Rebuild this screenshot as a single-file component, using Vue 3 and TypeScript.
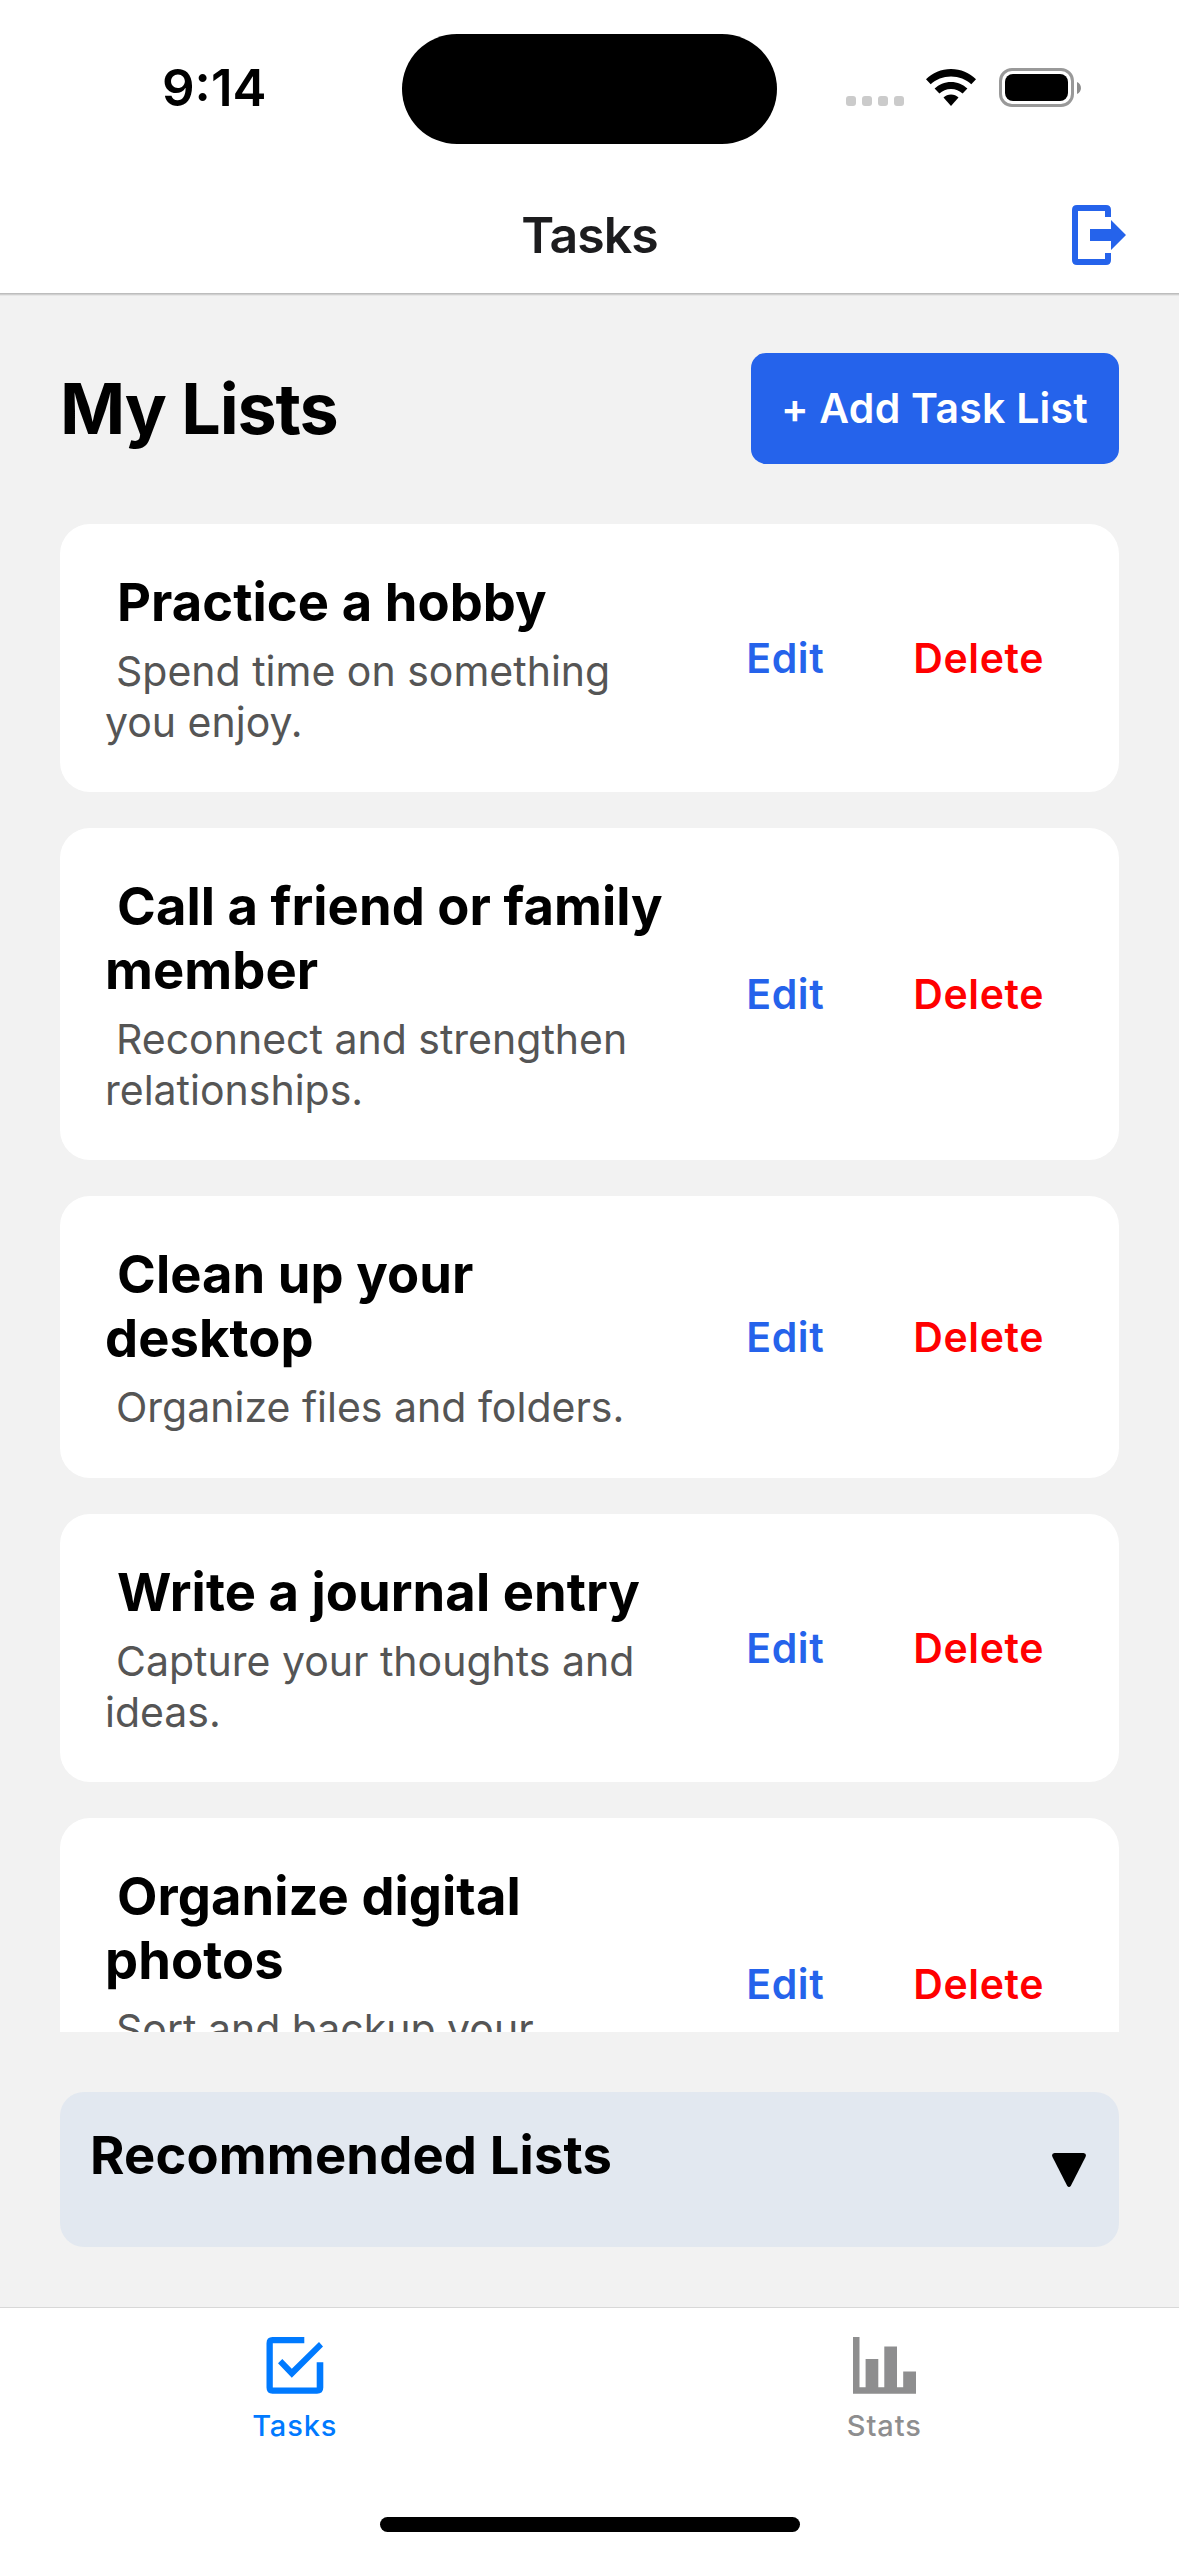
<script setup lang="ts">
interface TaskList {
  id: number
  title: string
  description: string
}

const lists: TaskList[] = [
  { id: 1, title: 'Practice a hobby', description: 'Spend time on something you enjoy.' },
  { id: 2, title: 'Call a friend or family member', description: 'Reconnect and strengthen relationships.' },
  { id: 3, title: 'Clean up your desktop', description: 'Organize files and folders.' },
  { id: 4, title: 'Write a journal entry', description: 'Capture your thoughts and ideas.' },
  { id: 5, title: 'Organize digital photos', description: 'Sort and backup your photos.' },
]
</script>

<template>
  <div class="screen">
    <div class="status">
      <div class="clock">9:14</div>
      <div class="island"></div>
      <div class="indicators">
        <div class="dots"><i v-for="n in 4" :key="n"></i></div>
        <svg class="wifi" width="50" height="37" viewBox="0 0 50 37">
          <path d="M25 0C34.800 0 43.500 3.900 50 10.300L45.300 15.300C40 10.300 32.900 7.400 25 7.400S10 10.300 4.700 15.300L0 10.300C6.500 3.900 15.200 0 25 0Z" />
          <path d="M25 12.900C31.400 12.900 37.100 15.400 41.400 19.500L36.600 24.600C33.600 21.700 29.500 20 25 20S16.400 21.700 13.400 24.600L8.600 19.500C12.900 15.400 18.600 12.900 25 12.900Z" />
          <path d="M25 25.600C27.900 25.600 30.500 26.700 32.500 28.600L25 37L17.500 28.600C19.500 26.700 22.100 25.600 25 25.600Z" />
        </svg>
        <div class="battery"><div class="charge"></div></div>
        <svg class="nub" width="4" height="12" viewBox="0 0 4 12"><path d="M0 0C5.300 2 5.300 10 0 12Z" fill="#8c8c8c" /></svg>
      </div>
    </div>

    <header class="nav">
      <h1>Tasks</h1>
      <svg class="logout" width="54" height="60" viewBox="0 0 54 60" fill="#2563eb">
        <path d="M5 0H34Q39 0 39 5V12H33V6H6V54H33V48H39V55Q39 60 34 60H5Q0 60 0 55V5Q0 0 5 0Z" />
        <path d="M18 24H39V15L54 30L39 45V36H18Z" />
      </svg>
    </header>

    <main>
      <div class="heading">
        <h2>My Lists</h2>
        <button class="add">+ Add Task List</button>
      </div>

      <div class="lists">
        <article v-for="list in lists" :key="list.id" class="card">
          <div class="info">
            <h3>{{ list.title }}</h3>
            <p>{{ list.description }}</p>
          </div>
          <button class="action edit">Edit</button>
          <button class="action delete">Delete</button>
        </article>
      </div>

      <section class="recommended">
        <h3>Recommended Lists</h3>
        <svg class="caret" width="34" height="34" viewBox="0 0 34 34">
          <path d="M2.500 0H31.500Q35 0.500 33.500 4L19 32.500Q17 35.500 15 32.500L0.500 4Q-1 0.500 2.500 0Z" />
        </svg>
      </section>
    </main>

    <nav class="tabs">
      <div class="tab active">
        <svg width="72" height="57" viewBox="0 0 72 57" fill="currentColor">
          <path d="M13.500 0H45.300V6.300H13.800V50.500H57.700V25.300H64.300V50.500Q64.300 56.700 58 56.700H13.500Q7.500 56.700 7.500 50.500V6.300Q7.500 0 13.500 0Z" />
          <path d="M19 26.300L23.300 22L32.800 31.800L60 5L64 9.500L32.800 40.700Z" />
        </svg>
        <span>Tasks</span>
      </div>
      <div class="tab">
        <svg width="63" height="57" viewBox="0 0 63 57" fill="currentColor">
          <path d="M0 0H6.500V50.300H12.600V22H25.300V50.300H31.300V9.500H44V50.300H50.200V34.500H63V56.700H0Z" />
        </svg>
        <span>Stats</span>
      </div>
    </nav>
    <div class="home"></div>
  </div>
</template>

<style>
body {
  margin: 0;
}
</style>

<style scoped>
.screen {
  width: 1179px;
  height: 2556px;
  overflow: hidden;
  display: flex;
  flex-direction: column;
  background: #fff;
  color: #000;
  font-family: Inter, "Liberation Sans", sans-serif;
}
h1, h2, h3, p {
  margin: 0;
}
button {
  border: 0;
  padding: 0;
  background: none;
  font-family: inherit;
}
svg {
  display: block;
}
.status {
  height: 177px;
  flex: none;
  display: flex;
  align-items: flex-start;
  box-sizing: border-box;
  padding-top: 34px;
}
.clock {
  box-sizing: border-box;
  width: 402px;
  padding-left: 162px;
  margin-top: 24px;
  font-size: 51px;
  line-height: 60px;
  font-weight: 600;
  letter-spacing: 0;
}
.island {
  width: 375px;
  height: 110px;
  border-radius: 55px;
  background: #000;
}
.indicators {
  display: flex;
  align-items: center;
  margin: 34px 0 0 69px;
  height: 39px;
}
.dots {
  display: flex;
  gap: 6px;
  margin: 27px 22px 0 0;
}
.dots i {
  width: 10px;
  height: 10px;
  border-radius: 3px;
  background: #cbcbcb;
}
.battery {
  width: 75px;
  height: 39px;
  box-sizing: border-box;
  border: 3px solid #999;
  border-radius: 13px;
  padding: 3px;
  margin-left: 23px;
}
.charge {
  height: 27px;
  border-radius: 8px;
  background: #000;
}
.nub {
  margin-left: 3px;
}
.nav {
  height: 116px;
  flex: none;
  display: grid;
  grid-template-columns: 1fr auto 1fr;
  align-items: center;
  border-bottom: 1px solid #bdbdbd;
}
.nav h1 {
  grid-column: 2;
  font-size: 50px;
  line-height: 60px;
  font-weight: 600;
  letter-spacing: -1px;
  color: #1c1c1e;
}
.logout {
  justify-self: end;
  margin-right: 53px;
}
main {
  height: 2013px;
  flex: none;
  box-sizing: border-box;
  padding: 59px 60px 60px;
  background: #f2f2f2;
  box-shadow: inset 0 1px #cfcfcf, inset 0 2px #e6e6e6;
  display: flex;
  flex-direction: column;
}
.heading {
  display: flex;
  justify-content: space-between;
  align-items: center;
  height: 111px;
  margin-bottom: 60px;
  flex: none;
}
.heading h2 {
  font-size: 70px;
  line-height: 84px;
  font-weight: 700;
  letter-spacing: -1.15px;
}
.add {
  width: 368px;
  height: 111px;
  padding: 0 1px 2px 0;
  border-radius: 15px;
  background: #2563eb;
  color: #fff;
  font-size: 41px;
  font-weight: 600;
  letter-spacing: 0.25px;
}
.lists {
  flex: 1;
  min-height: 0;
  overflow: hidden;
  display: flex;
  flex-direction: column;
  gap: 36px;
}
.card {
  flex: none;
  display: flex;
  align-items: center;
  padding: 45px 75px 45px 45px;
  border-radius: 30px;
  background: #fff;
}
.info {
  width: 575px;
  margin: 1px auto -1px 0;
}
.info h3 {
  font-size: 52.5px;
  line-height: 64px;
  font-weight: 700;
  letter-spacing: 0.06px;
  text-indent: 12px;
}
.info p {
  margin-top: 12px;
  min-height: 52px;
  font-size: 41px;
  line-height: 51px;
  color: #555;
  text-indent: 11px;
}
.action {
  font-size: 41px;
  line-height: 51px;
  font-weight: 600;
  letter-spacing: 0.6px;
}
.edit {
  color: #2563eb;
  margin-right: 89px;
}
.delete {
  color: #f00;
}
.recommended {
  height: 155px;
  flex: none;
  margin-top: 60px;
  box-sizing: border-box;
  padding: 31px 33px 29px 30px;
  border-radius: 24px;
  background: #e2e8f0;
  display: flex;
  justify-content: space-between;
}
.recommended h3 {
  font-size: 52.5px;
  line-height: 64px;
  font-weight: 700;
  letter-spacing: 0.15px;
}
.caret {
  margin-top: 30px;
}
.tabs {
  height: 210px;
  flex: none;
  box-sizing: border-box;
  border-top: 1px solid #d8d8d8;
  display: grid;
  grid-template-columns: 1fr 1fr;
}
.tab {
  display: flex;
  flex-direction: column;
  align-items: center;
  padding-top: 29px;
  color: #8e8e8f;
}
.tab.active {
  color: #007aff;
}
.tab span {
  margin-top: 14px;
  font-size: 29px;
  line-height: 36px;
  font-weight: 500;
  letter-spacing: 0.9px;
}
.home {
  width: 420px;
  height: 15px;
  border-radius: 8px;
  background: #000;
  align-self: center;
}
</style>
